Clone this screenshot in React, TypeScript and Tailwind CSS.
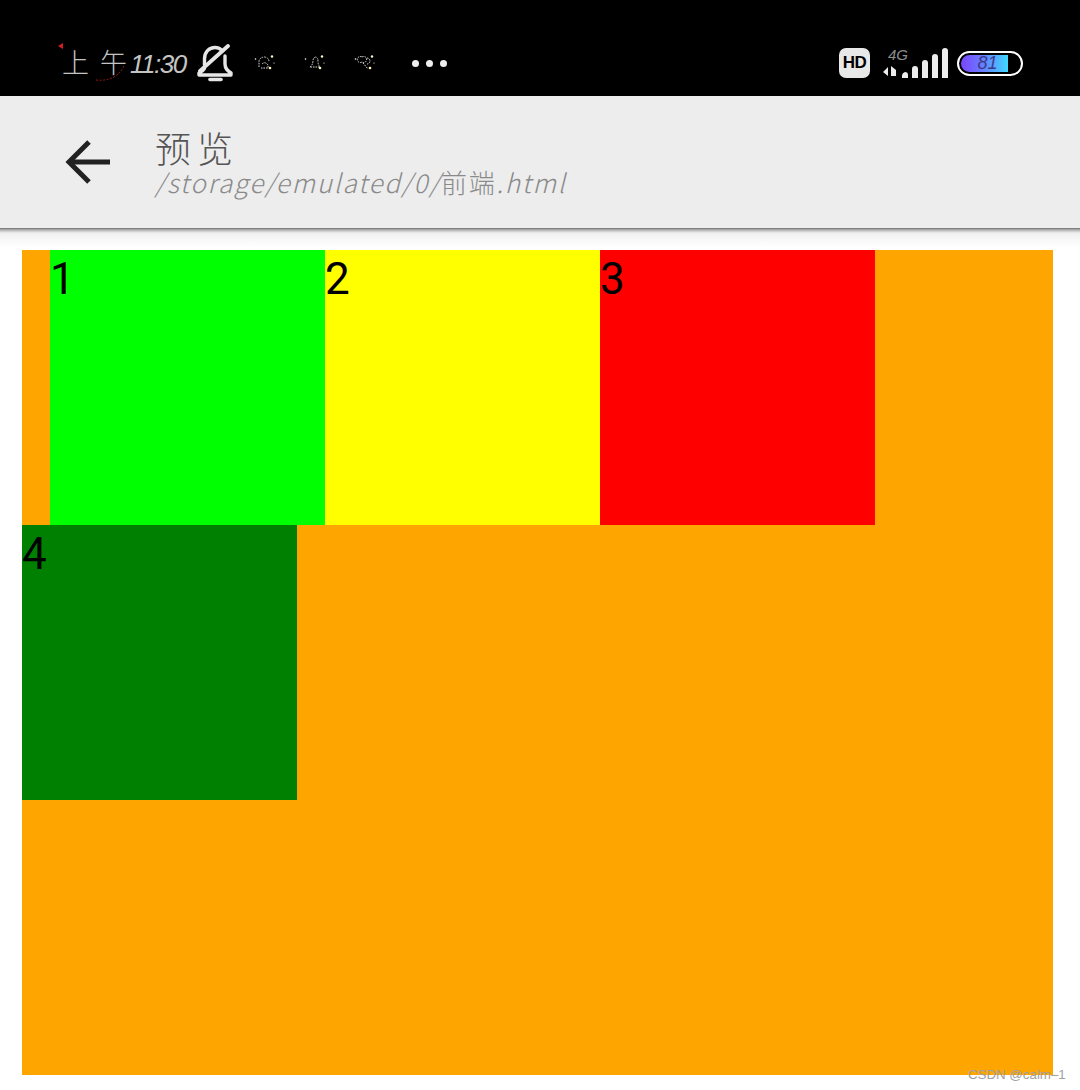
import { ReactNode } from "react";

const CJK = "font-['Noto_Sans_CJK_SC','Noto_Sans',sans-serif]";

function BellOff() {
  return (
    <svg width="36" height="38" viewBox="0 0 36 38" fill="none" stroke="#e6e6e6" strokeWidth="3.4" strokeLinejoin="round" strokeLinecap="round">
      <path d="M7.5 21 V15 C7.5 8 12 3.5 18 3.5 C20.5 3.5 23 4.5 24.5 6" />
      <path d="M28 12 V20 C28 25 31 27 34 29 V31 H2 V29 C4 28 6.5 26.5 7.5 24.5" />
      <path d="M3 27 L31 2" strokeWidth="3.8" />
      <path d="M13 35.5 H24" strokeWidth="3.6" />
    </svg>
  );
}

function TinyIcon({ d }: { d: string }) {
  return (
    <svg width="22" height="20" viewBox="0 0 22 20" fill="none">
      <path d={d} stroke="#d8d8d8" strokeWidth="1" strokeDasharray="1.6 1" />
      <circle cx="18" cy="3.5" r="1.2" fill="#fff6c8" />
      <circle cx="16" cy="15" r="1.3" fill="#fff6c8" />
      <circle cx="1.5" cy="6" r="0.8" fill="#ffffff" />
      <circle cx="20" cy="10" r="0.6" fill="#ffffff" />
    </svg>
  );
}

function Signal() {
  return (
    <svg width="66" height="36" viewBox="0 0 66 36" className="mt-[2px]">
      <text x="6" y="14" fontSize="15" fontStyle="italic" fontWeight="300" fontFamily="Liberation Sans, sans-serif" fill="#8c8c8c">
        4G
      </text>
      <path d="M6 21 V30 L1 26 Z M9 30 V20 L14 24 V30 Z" fill="#ececec" />
      <path
        d="M20 30 V28 Q20 25 23 24 Q26 24 26 27 V30 Z M30 30 V21 Q30 18 33 18 Q36 18 36 21 V30 Z M40 30 V15 Q40 12 43 12 Q46 12 46 15 V30 Z M50 30 V9 Q50 6 53 6 Q56 6 56 9 V30 Z M60 30 V3 Q60 0 63 0 Q66 0 66 3 V30 Z"
        fill="#ececec"
        transform="translate(0 2)"
      />
    </svg>
  );
}

function Box({ color, label, className = "" }: { color: string; label: string; className?: string }) {
  return (
    <div className={`h-[275px] w-[275px] text-[44px] leading-[59px] text-black font-['Roboto',sans-serif] ${color} ${className}`}>
      {label}
    </div>
  );
}

function StatusGroup({ children, className = "" }: { children: ReactNode; className?: string }) {
  return <div className={`flex items-center ${className}`}>{children}</div>;
}

export default function App() {
  return (
    <div className="relative h-[1090px] w-[1080px] overflow-hidden bg-white">
      {/* Status bar */}
      <div className="flex h-[96px] items-center justify-between bg-black pl-[62px] pr-[57px] pt-[30px]">
        <StatusGroup>
          <span className={`relative w-[135px] whitespace-nowrap text-[27px] font-light leading-[36px] text-[#c4c4c4] ${CJK}`}>
            <span>上</span>
            <span className="ml-[11px]">午</span>
            <span className="ml-[3px] font-['Liberation_Sans',sans-serif] text-[26px] italic tracking-[-1.5px]">11:30</span>
            <svg className="absolute left-[-4px] top-[-6px]" width="70" height="44" viewBox="0 0 70 44" fill="none">
              <path d="M0 8 L5 5 L5 11 Z" fill="#d02020" />
              <path d="M38 42 Q58 44 66 28" stroke="#a01818" strokeWidth="1" strokeDasharray="2 1.5" />
            </svg>
          </span>
          <BellOff />
          <div className="ml-[21px] flex gap-[28px]">
            <TinyIcon d="M5 14 V8 Q6 4 11 4 Q15 5 15 9 M8 11 Q11 8 14 12 V15 H7" />
            <TinyIcon d="M6 14 Q9 12 9 7 Q10 4 12 4 Q14 5 14 8 Q14 12 16 14 Z" />
            <TinyIcon d="M8 4 A3 3 0 1 1 8 9 A3 3 0 1 1 8 4 M13 5 A3 3 0 1 1 13 11 M9 10 L14 16" />
          </div>
          <div className="ml-[36px] flex gap-[7px]">
            <span className="h-[7px] w-[7px] rounded-full bg-[#eeeeee]" />
            <span className="h-[7px] w-[7px] rounded-full bg-[#eeeeee]" />
            <span className="h-[7px] w-[7px] rounded-full bg-[#eeeeee]" />
          </div>
        </StatusGroup>
        <StatusGroup>
          <span className="flex h-[30px] w-[31px] items-center justify-center rounded-[7px] bg-[#e8e8e8] font-['Liberation_Sans',sans-serif] text-[17px] font-bold tracking-[-0.5px] text-black">
            HD
          </span>
          <span className="ml-[12px]">
            <Signal />
          </span>
          <span className="ml-[9px] flex h-[25px] w-[66px] items-center rounded-full border-2 border-white p-[2px]">
            <span className="flex h-full w-[47px] items-center justify-center rounded-l-full bg-[linear-gradient(90deg,#7a45ff,#6a7cff_45%,#3fd8ff)] pl-[6px] font-['Liberation_Sans',sans-serif] text-[18px] font-light italic leading-none text-[#3a3a8a]">
              81
            </span>
          </span>
        </StatusGroup>
      </div>

      {/* App bar */}
      <div className="flex h-[132px] items-center bg-[#ededed] pl-[65px]">
        <svg width="46" height="46" viewBox="0 0 46 46" fill="none" stroke="#222222" strokeWidth="5">
          <path d="M45 23 H4" />
          <path d="M24 3 L4 23 L24 43" />
        </svg>
        <div className={`ml-[44px] flex flex-col ${CJK}`}>
          <span className="text-[36px] font-light leading-[40px] tracking-[6px] text-[#555555]">预览</span>
          <span className="whitespace-nowrap text-[26px] font-light leading-[30px] tracking-[1.7px] text-[#8a8a8a]">
            <span className="italic">/storage/emulated/0/</span>前端<span className="italic">.html</span>
          </span>
        </div>
      </div>
      <div className="h-[22px] bg-[linear-gradient(180deg,#6f6f6f_0,#b5b5b5_2px,#efefef_5px,#fafafa_14px,#ffffff_20px)]" />

      {/* Flex demo */}
      <div className="ml-[22px] flex h-[825px] w-[1031px] flex-wrap content-start bg-[#ffa500]">
        <Box color="bg-[#00ff00]" label="1" className="ml-[28px]" />
        <Box color="bg-[#ffff00]" label="2" />
        <Box color="bg-[#ff0000]" label="3" />
        <Box color="bg-[#008000]" label="4" />
      </div>

      {/* Watermark */}
      <span className="absolute left-[968px] top-[1067px] font-['Liberation_Sans',sans-serif] text-[13.3px] leading-[16px] text-[#a0a0a0]">
        CSDN @calm–1
      </span>
    </div>
  );
}
